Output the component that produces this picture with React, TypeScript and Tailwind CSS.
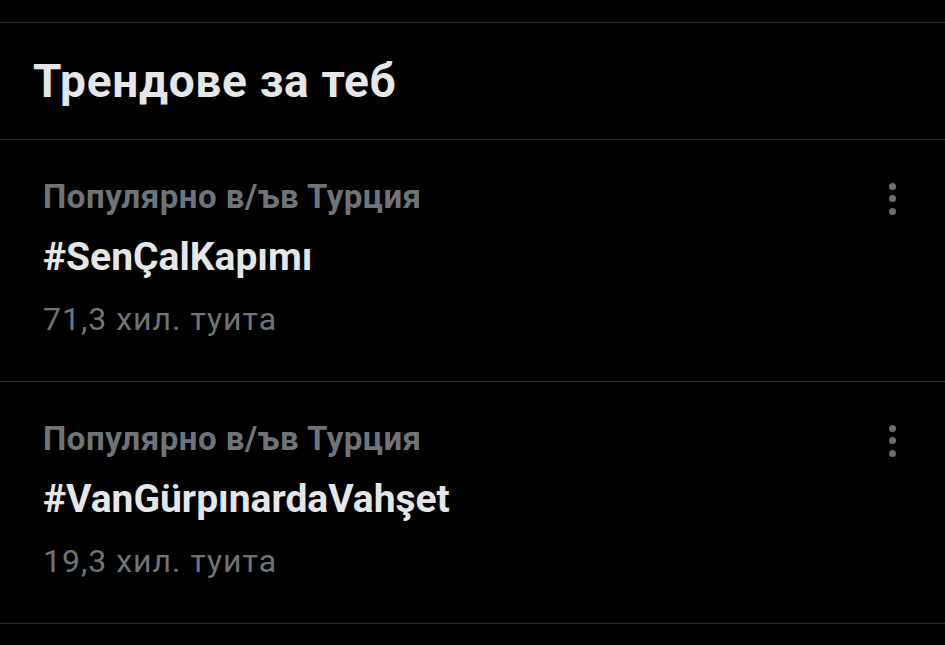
import React from "react";

const trends = [
  { label: "Популярно в/ъв Турция", tag: "#SenÇalKapımı", count: "71,3 хил. туита" },
  { label: "Популярно в/ъв Турция", tag: "#VanGürpınardaVahşet", count: "19,3 хил. туита" },
];

function Dots() {
  return (
    <div className="flex flex-col items-center gap-[5.5px] pt-[3.5px]">
      <span className="block w-[7px] h-[7px] rounded-full bg-[#6b6f73]" />
      <span className="block w-[7px] h-[7px] rounded-full bg-[#6b6f73]" />
      <span className="block w-[7px] h-[7px] rounded-full bg-[#6b6f73]" />
    </div>
  );
}

export default function App() {
  return (
    <div
      className="w-[945px] h-[645px] bg-black overflow-hidden"
      style={{ fontFamily: "Roboto, 'Noto Sans', sans-serif" }}
    >
      <div className="h-[22px]" />
      <div className="border-t border-[#2f3133] h-[117px] flex items-center px-[33px]">
        <h1 className="text-[46px] leading-[54px] font-bold text-[#e4e6e7] tracking-[0.7px]">
          Трендове за теб
        </h1>
      </div>
      {trends.map((t, i) => (
        <div key={i} className="border-t border-[#2f3133] h-[242px] flex pl-[43px] pr-[49px] pt-[39px]">
          <div className="flex-1 flex flex-col">
            <div className="text-[33px] leading-[36px] font-bold text-[#6f7478] tracking-[0.5px]">{t.label}</div>
            <div className="mt-[20px] text-[39px] leading-[44px] font-bold text-[#e4e6e7]">{t.tag}</div>
            <div className="mt-[22px] text-[32px] leading-[36px] text-[#6f7478] tracking-[1px]">{t.count}</div>
          </div>
          <Dots />
        </div>
      ))}
      <div className="border-t border-[#2f3133]" />
    </div>
  );
}
